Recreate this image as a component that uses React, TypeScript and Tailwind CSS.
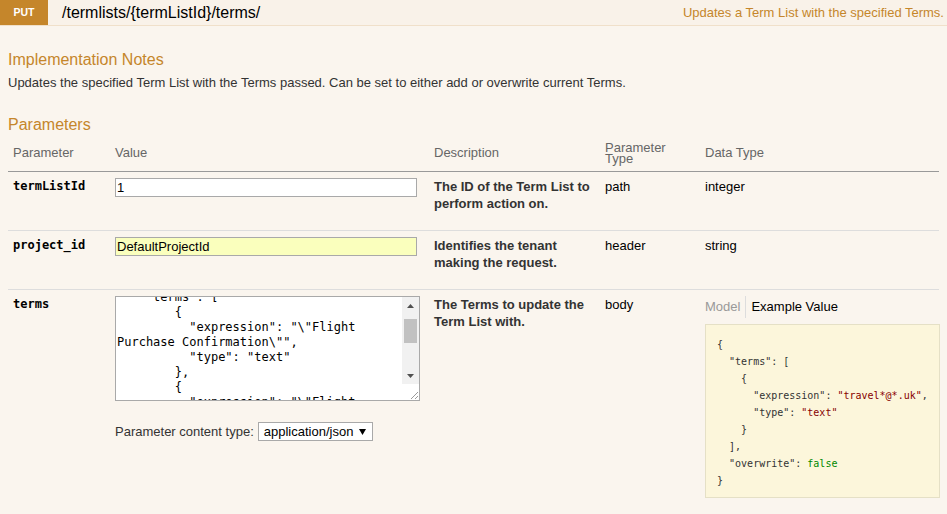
import React from 'react';

const mono = "font-['DejaVu_Sans_Mono',monospace]";

const bodyLines = [
    '    "terms": [',
    '        {',
    '          "expression": "\\"Flight',
    'Purchase Confirmation\\"",',
    '          "type": "text"',
    '        },',
    '        {',
    '          "expression": "\\"Flight',
].join('\n');

function Key({ children }: { children: React.ReactNode }) {
    return <span className="text-[#333]">{children}</span>;
}

function Str({ children }: { children: React.ReactNode }) {
    return <span className="text-[#880000]">{children}</span>;
}

function FakeTextarea() {
    return (
        <div className="flex h-[105px] w-[305px] border border-[#a9a9a9] bg-white">
            <div className="flex-1 overflow-hidden pl-[1px]">
                <pre className={`${mono} -mt-[7px] text-[12px] leading-[15px] text-black`}>{bodyLines}</pre>
            </div>
            <div className="flex w-[17px] flex-col bg-[#f1f1f1]">
                <div className="flex h-[17px] items-center justify-center">
                    <svg width="7" height="4" viewBox="0 0 7 4">
                        <polygon points="0,4 3.5,0 7,4" fill="#505050" />
                    </svg>
                </div>
                <div className="flex-1 px-[2px] pt-[5px]">
                    <div className="h-[24px] bg-[#c1c1c1]" />
                </div>
                <div className="flex h-[17px] items-center justify-center">
                    <svg width="7" height="4" viewBox="0 0 7 4">
                        <polygon points="0,0 7,0 3.5,4" fill="#505050" />
                    </svg>
                </div>
                <div className="flex h-[16px] items-end justify-end bg-white">
                    <svg width="10" height="10" viewBox="0 0 10 10">
                        <line x1="9" y1="2" x2="2" y2="9" stroke="#9a9a9a" strokeWidth="1" />
                        <line x1="9" y1="6" x2="6" y2="9" stroke="#9a9a9a" strokeWidth="1" />
                    </svg>
                </div>
            </div>
        </div>
    );
}

export default function App() {
    const cols = 'grid grid-cols-[102px_319px_171px_100px_1fr]';

    return (
        <div className="min-h-screen bg-[#faf5ee] font-['Liberation_Sans',Arial,sans-serif] text-[13px] text-[#333]">
            {/* Operation heading */}
            <div className="flex h-[26px] items-start border-b border-[#f0e0ca] bg-[#f9f2e9]">
                <span className="flex h-[25px] w-[48px] items-center justify-center bg-[#c5862b] text-[10.5px] font-bold text-white">
                    PUT
                </span>
                <span className="ml-[14px] text-[16px] leading-[25px] text-black">{'/termlists/{termListId}/terms/'}</span>
                <span className="ml-auto pr-[3px] text-[13px] leading-[25px] text-[#c5862b]">
                    Updates a Term List with the specified Terms.
                </span>
            </div>

            <div className="px-[8px] pt-[24px]">
                <h4 className="text-[16px] leading-[19px] text-[#c5862b]">Implementation Notes</h4>
                <p className="mt-[5px] leading-[18px]">
                    Updates the specified Term List with the Terms passed. Can be set to either add or overwrite current Terms.
                </p>

                <h4 className="mt-[23px] text-[16px] leading-[19px] text-[#c5862b]">Parameters</h4>

                {/* Table head */}
                <div className={`${cols} h-[38px] items-center border-b border-[#999] text-[#666]`}>
                    <div className="pl-[5px]">Parameter</div>
                    <div className="pl-[5px]">Value</div>
                    <div className="pl-[5px]">Description</div>
                    <div className="pl-[5px] leading-[11px]">
                        Parameter
                        <br />
                        Type
                    </div>
                    <div className="pl-[5px]">Data Type</div>
                </div>

                {/* termListId */}
                <div className={`${cols} items-start leading-[17px]`}>
                    <div className={`${mono} py-[6px] pl-[5px] text-[12px] font-bold text-black`}>termListId</div>
                    <div className="py-[6px] pl-[5px]">
                        <input
                            readOnly
                            defaultValue="1"
                            className="h-[19px] w-[302px] border border-[#a9a9a9] bg-white pl-[1px] text-[13px] text-black outline-none"
                        />
                    </div>
                    <div className="py-[6px] pr-[5px] pl-[5px]">
                        <p className="mb-[12px] font-bold">The ID of the Term List to perform action on.</p>
                    </div>
                    <div className="py-[6px] pl-[5px] text-black">path</div>
                    <div className="py-[6px] pl-[5px] text-black">integer</div>
                </div>

                {/* project_id */}
                <div className={`${cols} items-start border-t border-[#ddd] leading-[17px]`}>
                    <div className={`${mono} py-[6px] pl-[5px] text-[12px] font-bold text-black`}>project_id</div>
                    <div className="py-[6px] pl-[5px]">
                        <input
                            readOnly
                            defaultValue="DefaultProjectId"
                            className="h-[19px] w-[302px] border border-[#a9a9a9] bg-[#faffbd] pl-[1px] text-[13px] text-black outline-none"
                        />
                    </div>
                    <div className="py-[6px] pr-[5px] pl-[5px]">
                        <p className="mb-[12px] font-bold">Identifies the tenant making the request.</p>
                    </div>
                    <div className="py-[6px] pl-[5px] text-black">header</div>
                    <div className="py-[6px] pl-[5px] text-black">string</div>
                </div>

                {/* terms */}
                <div className={`${cols} items-start border-t border-[#ddd] leading-[17px]`}>
                    <div className={`${mono} py-[6px] pl-[5px] text-[12px] font-bold text-black`}>terms</div>
                    <div className="py-[6px] pl-[5px]">
                        <FakeTextarea />
                        <div className="mt-[21px] flex h-[19px] items-center">
                            <span className="text-[#333]">Parameter content type:</span>
                            <div className="ml-[4px] flex h-[19px] items-center gap-[6px] border border-[#a9a9a9] bg-white pr-[6px] pl-[5px] text-black">
                                <span>application/json</span>
                                <svg width="7" height="6" viewBox="0 0 7 6">
                                    <polygon points="0,0 7,0 3.5,6" fill="#000" />
                                </svg>
                            </div>
                        </div>
                    </div>
                    <div className="py-[6px] pr-[5px] pl-[5px]">
                        <p className="mb-[12px] font-bold">The Terms to update the Term List with.</p>
                    </div>
                    <div className="py-[6px] pl-[5px] text-black">body</div>
                    <div className="py-[6px] pl-[5px]">
                        <div className="flex h-[22px] items-stretch leading-[22px]">
                            <span className="border-r border-[#ddd] pr-[5px] text-[#999]">Model</span>
                            <span className="pl-[5px] text-black">Example Value</span>
                        </div>
                        <pre
                            className={`${mono} mt-[6px] border border-[#e5e0c6] bg-[#fcf6db] px-[11px] pt-[11px] pb-[8px] text-[10px] leading-[17px] text-[#333]`}
                        >
                            {'{\n  '}
                            <Key>"terms"</Key>
                            {': [\n    {\n      '}
                            <Key>"expression"</Key>
                            {': '}
                            <Str>"travel*@*.uk"</Str>
                            {',\n      '}
                            <Key>"type"</Key>
                            {': '}
                            <Str>"text"</Str>
                            {'\n    }\n  ],\n  '}
                            <Key>"overwrite"</Key>
                            {': '}
                            <span className="text-[#008800]">false</span>
                            {'\n}'}
                        </pre>
                    </div>
                </div>
            </div>
        </div>
    );
}
